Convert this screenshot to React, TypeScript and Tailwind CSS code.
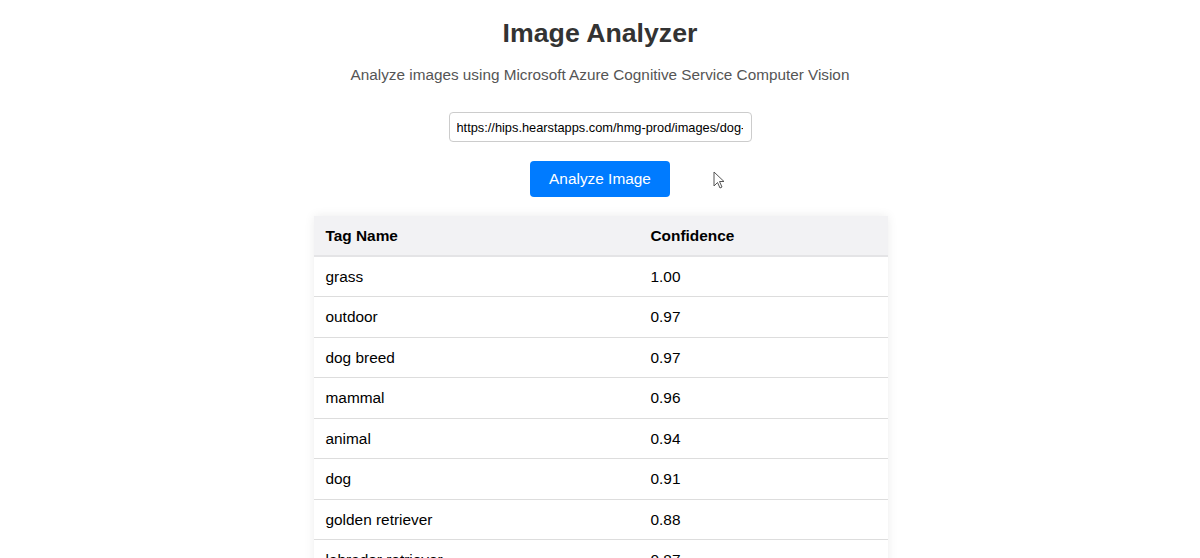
import React from "react";

const tags: [string, string][] = [
  ["grass", "1.00"],
  ["outdoor", "0.97"],
  ["dog breed", "0.97"],
  ["mammal", "0.96"],
  ["animal", "0.94"],
  ["dog", "0.91"],
  ["golden retriever", "0.88"],
  ["labrador retriever", "0.87"],
  ["retriever", "0.86"],
];

export default function App() {
  return (
    <div
      className="relative min-h-screen bg-white text-[#222] flex flex-col items-center"
      style={{ fontFamily: '"Liberation Sans", Arial, sans-serif' }}
    >
      <h1 className="mt-[17px] text-[26.7px] leading-[32px] font-bold text-[#333]">
        Image Analyzer
      </h1>
      <p className="mt-[16px] text-[15.3px] leading-[20px] text-[#555]">
        Analyze images using Microsoft Azure Cognitive Service Computer Vision
      </p>

      <input
        readOnly
        value="https://hips.hearstapps.com/hmg-prod/images/dog-puppy-on-garden-royalty-free-image-1586966191.jpg"
        className="mt-[27px] w-[303px] h-[30px] pl-[7px] pr-[8px] text-[12.8px] text-black border border-[#ccc] rounded-[4px] outline-none"
      />

      <button className="mt-[19px] w-[140px] h-[36px] bg-[#007bff] text-white text-[15.4px] rounded-[4px]">
        Analyze Image
      </button>

      <table className="mt-[19px] ml-[1px] w-[574px] border-collapse text-[15.4px] text-black shadow-[0_0_10px_rgba(0,0,0,0.08)]">
        <thead>
          <tr className="bg-[#f2f2f4]">
            <th className="w-[325px] h-[40px] px-3 text-left font-bold border-b-2 border-[#e4e4e6]">
              Tag Name
            </th>
            <th className="h-[40px] px-3 text-left font-bold border-b-2 border-[#e4e4e6]">
              Confidence
            </th>
          </tr>
        </thead>
        <tbody>
          {tags.map(([name, conf]) => (
            <tr key={name} className="border-b border-[#dddddd]">
              <td className="h-[40.5px] px-3">{name}</td>
              <td className="h-[40.5px] px-3">{conf}</td>
            </tr>
          ))}
        </tbody>
      </table>

      {/* mouse pointer */}
      <svg
        className="absolute left-[713px] top-[171px]"
        width="14"
        height="20"
        viewBox="0 0 14 20"
      >
        <path
          d="M1 1 L1 15 L4.5 11.5 L7 17 L9 16 L6.5 10.5 L11 10.5 Z"
          fill="white"
          stroke="#555"
          strokeWidth="1"
        />
      </svg>
    </div>
  );
}
